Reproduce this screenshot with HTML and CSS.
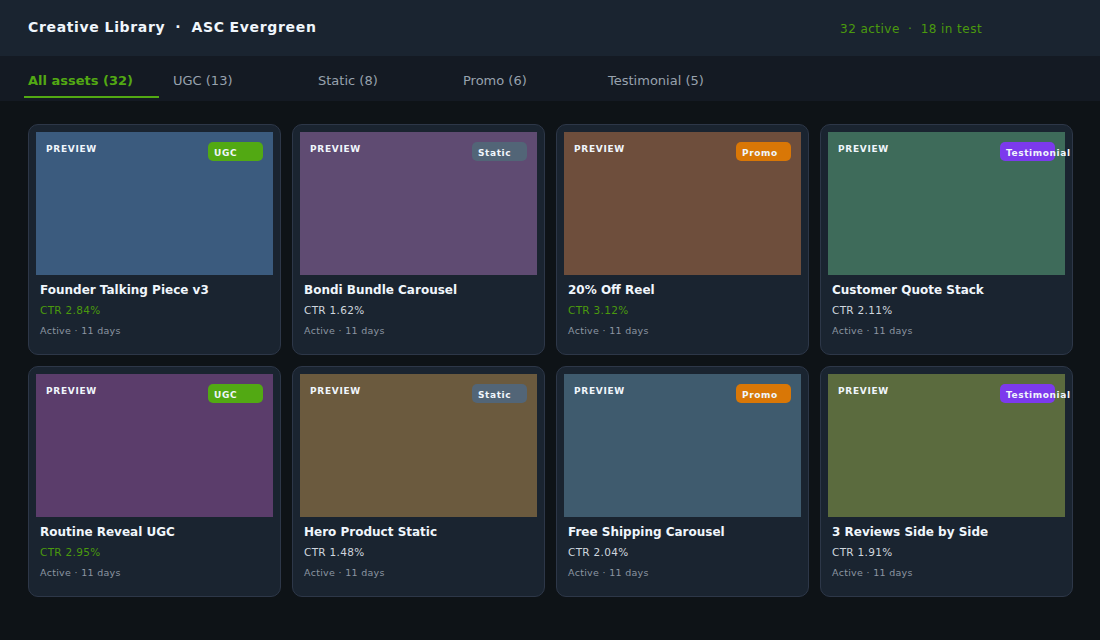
FILE: index.html
```html
<!DOCTYPE html>
<html lang="en">
<head>
    <meta charset="UTF-8">
    <title>Creative Library</title>
    <link rel="stylesheet" href="styles.css">
</head>
<body>
    <div class="header">
        <div class="title">Creative Library &nbsp;·&nbsp; ASC Evergreen</div>
        <div class="summary">32 active &nbsp;·&nbsp; 18 in test</div>
    </div>

    <div class="tabs">
        <div class="tab active">All assets (32)</div>
        <div class="tab">UGC (13)</div>
        <div class="tab">Static (8)</div>
        <div class="tab">Promo (6)</div>
        <div class="tab">Testimonial (5)</div>
    </div>

    <div class="grid">
        <div class="card">
            <div class="thumb blue">
                <span class="preview">PREVIEW</span>
                <span class="badge ugc">UGC</span>
            </div>
            <div class="name">Founder Talking Piece v3</div>
            <div class="ctr good">CTR 2.84%</div>
            <div class="meta">Active · 11 days</div>
        </div>
        <div class="card">
            <div class="thumb mauve">
                <span class="preview">PREVIEW</span>
                <span class="badge static">Static</span>
            </div>
            <div class="name">Bondi Bundle Carousel</div>
            <div class="ctr">CTR 1.62%</div>
            <div class="meta">Active · 11 days</div>
        </div>
        <div class="card">
            <div class="thumb brown">
                <span class="preview">PREVIEW</span>
                <span class="badge promo">Promo</span>
            </div>
            <div class="name">20% Off Reel</div>
            <div class="ctr good">CTR 3.12%</div>
            <div class="meta">Active · 11 days</div>
        </div>
        <div class="card">
            <div class="thumb green">
                <span class="preview">PREVIEW</span>
                <span class="badge testimonial">Testimonial</span>
            </div>
            <div class="name">Customer Quote Stack</div>
            <div class="ctr">CTR 2.11%</div>
            <div class="meta">Active · 11 days</div>
        </div>
        <div class="card">
            <div class="thumb plum">
                <span class="preview">PREVIEW</span>
                <span class="badge ugc">UGC</span>
            </div>
            <div class="name">Routine Reveal UGC</div>
            <div class="ctr good">CTR 2.95%</div>
            <div class="meta">Active · 11 days</div>
        </div>
        <div class="card">
            <div class="thumb khaki">
                <span class="preview">PREVIEW</span>
                <span class="badge static">Static</span>
            </div>
            <div class="name">Hero Product Static</div>
            <div class="ctr">CTR 1.48%</div>
            <div class="meta">Active · 11 days</div>
        </div>
        <div class="card">
            <div class="thumb slate">
                <span class="preview">PREVIEW</span>
                <span class="badge promo">Promo</span>
            </div>
            <div class="name">Free Shipping Carousel</div>
            <div class="ctr">CTR 2.04%</div>
            <div class="meta">Active · 11 days</div>
        </div>
        <div class="card">
            <div class="thumb olive">
                <span class="preview">PREVIEW</span>
                <span class="badge testimonial">Testimonial</span>
            </div>
            <div class="name">3 Reviews Side by Side</div>
            <div class="ctr">CTR 1.91%</div>
            <div class="meta">Active · 11 days</div>
        </div>
    </div>
</body>
</html>
```

FILE: styles.css
```css
body {
    margin: 0;
    height: 640px;
    overflow: hidden;
    background-color: #0e1317;
    font-family: "DejaVu Sans", sans-serif;
}

.header {
    display: flex;
    height: 56px;
    padding-left: 28px;
    background-color: #1a2430;
}

.title {
    width: 812px;
    padding-top: 18px;
    font-size: 14px;
    line-height: 18px;
    font-weight: 700;
    letter-spacing: 0.66px;
    word-spacing: -0.5px;
    color: #f0f6fc;
}

.summary {
    padding-top: 20px;
    font-size: 12px;
    line-height: 18px;
    letter-spacing: 0.5px;
    word-spacing: -0.2px;
    color: #4a9a0e;
}

.tabs {
    display: flex;
    gap: 10px;
    height: 45px;
    padding-left: 24px;
    background-color: #141a23;
}

.tab {
    box-sizing: border-box;
    width: 135px;
    height: 42px;
    padding: 16px 0 0 4px;
    font-size: 13px;
    line-height: 17px;
    color: #98a2ae;
}

.tab.active {
    border-bottom: 2px solid #52a913;
    font-weight: 700;
    color: #52a913;
}

.grid {
    display: grid;
    grid-template-columns: repeat(4, 253px);
    grid-auto-rows: 231px;
    gap: 11px;
    padding: 23px 0 0 28px;
}

.card {
    box-sizing: border-box;
    padding: 7px;
    background-color: #1a2430;
    border: 1px solid #2d3748;
    border-radius: 10px;
}

.thumb {
    position: relative;
    height: 143px;
    margin-bottom: 7px;
}

.blue { background-color: #3b5b7e; }
.mauve { background-color: #5f4b72; }
.brown { background-color: #6e4e3c; }
.green { background-color: #3e6b5a; }
.plum { background-color: #5b3d6b; }
.khaki { background-color: #6b5a3e; }
.slate { background-color: #3f5b6e; }
.olive { background-color: #5b6b3e; }

.preview {
    position: absolute;
    top: 10px;
    left: 10px;
    font-size: 9px;
    line-height: 14px;
    font-weight: 700;
    letter-spacing: 0.7px;
    color: #f0f6fc;
}

.badge {
    position: absolute;
    top: 10px;
    left: 172px;
    box-sizing: border-box;
    width: 55px;
    height: 19px;
    padding: 4px 0 0 6px;
    border-radius: 5px;
    font-size: 9px;
    line-height: 14px;
    font-weight: 700;
    letter-spacing: 0.6px;
    white-space: nowrap;
    color: #f0f6fc;
}

.ugc { background-color: #52a913; }
.static { background-color: #526577; }
.promo { background-color: #d97706; }
.testimonial { background-color: #7c3aed; }

.name {
    padding-left: 4px;
    font-size: 12px;
    line-height: 17px;
    font-weight: 700;
    color: #f0f6fc;
}

.ctr {
    margin-top: 4px;
    padding-left: 4px;
    font-size: 10.5px;
    line-height: 14px;
    letter-spacing: 0.3px;
    color: #cfd6de;
}

.ctr.good {
    color: #4a9a0e;
}

.meta {
    margin-top: 7px;
    padding-left: 4px;
    font-size: 9.5px;
    line-height: 14px;
    letter-spacing: 0.3px;
    color: #8b95a1;
}
```
